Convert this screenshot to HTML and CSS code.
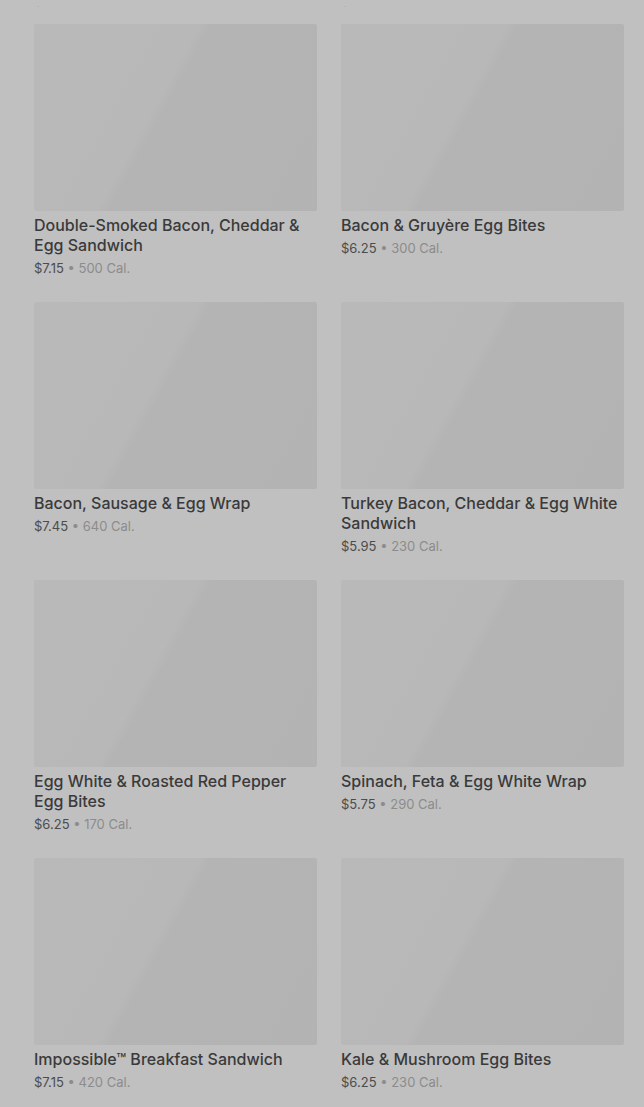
FILE: index.html
```html
<!DOCTYPE html>
<html lang="en">
<head>
    <meta charset="UTF-8">
    <meta name="viewport" content="width=device-width, initial-scale=1.0">
    <title>Breakfast Menu</title>
    <link rel="stylesheet" href="styles.css">
</head>
<body>

    <div class="menu">
        <!-- tail of the row above -->
        <div class="prev-row">
            <p class="meta"><span class="price">$6.45</span> • 360 Cal.</p>
            <p class="meta"><span class="price">$5.95</span> • 300 Cal.</p>
        </div>

        <div class="grid">
            <div class="card">
                <div class="thumb"></div>
                <h3 class="name">Double-Smoked Bacon, Cheddar &amp; Egg Sandwich</h3>
                <p class="meta"><span class="price">$7.15</span> • 500 Cal.</p>
            </div>
            <div class="card">
                <div class="thumb"></div>
                <h3 class="name">Bacon &amp; Gruyère Egg Bites</h3>
                <p class="meta"><span class="price">$6.25</span> • 300 Cal.</p>
            </div>

            <div class="card">
                <div class="thumb"></div>
                <h3 class="name">Bacon, Sausage &amp; Egg Wrap</h3>
                <p class="meta"><span class="price">$7.45</span> • 640 Cal.</p>
            </div>
            <div class="card">
                <div class="thumb"></div>
                <h3 class="name">Turkey Bacon, Cheddar &amp; Egg White Sandwich</h3>
                <p class="meta"><span class="price">$5.95</span> • 230 Cal.</p>
            </div>

            <div class="card">
                <div class="thumb"></div>
                <h3 class="name">Egg White &amp; Roasted Red Pepper Egg Bites</h3>
                <p class="meta"><span class="price">$6.25</span> • 170 Cal.</p>
            </div>
            <div class="card">
                <div class="thumb"></div>
                <h3 class="name">Spinach, Feta &amp; Egg White Wrap</h3>
                <p class="meta"><span class="price">$5.75</span> • 290 Cal.</p>
            </div>

            <div class="card">
                <div class="thumb"></div>
                <h3 class="name">Impossible™ Breakfast Sandwich</h3>
                <p class="meta"><span class="price">$7.15</span> • 420 Cal.</p>
            </div>
            <div class="card">
                <div class="thumb"></div>
                <h3 class="name">Kale &amp; Mushroom Egg Bites</h3>
                <p class="meta"><span class="price">$6.25</span> • 230 Cal.</p>
            </div>
        </div>
    </div>

</body>
</html>
```

FILE: styles.css
```css
body {
    margin: 0;
    font-family: Inter, "Noto Sans", sans-serif;
    background-color: #c0c0c0;
    overflow: hidden;
}

.menu {
    padding: 0 20px 0 34px;
}

/* only the bottom of the previous row's price line shows */
.prev-row {
    display: grid;
    grid-template-columns: repeat(2, 283px);
    column-gap: 24px;
    align-items: end;
    height: 7px;
    overflow: hidden;
}

.grid {
    display: grid;
    grid-template-columns: repeat(2, 283px);
    gap: 24px;
    margin-top: 17px;
}

.card {
    display: flex;
    flex-direction: column;
}

.thumb {
    height: 187px;
    border-radius: 2px;
    background: linear-gradient(119deg, #b9b9b9 0%, #b8b8b8 43%, #b4b4b4 46%, #b3b3b3 100%);
}

.name {
    margin: 4px 0 0;
    font-size: 16px;
    font-weight: 500;
    line-height: 20px;
    color: #3a3a3a;
}

.meta {
    margin: 3px 0 0;
    font-size: 13px;
    line-height: 20px;
    color: #8c8c8c;
}

.price {
    color: #4c4c4c;
}
```
